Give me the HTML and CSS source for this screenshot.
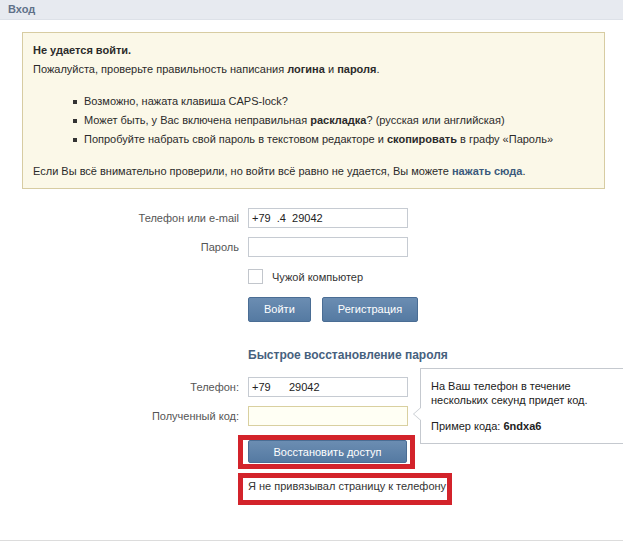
FILE: index.html
```html
<!DOCTYPE html>
<html lang="ru">
<head>
<meta charset="utf-8">
<title>Вход</title>
<link rel="stylesheet" href="styles.css">
</head>
<body>
<div class="header"><span class="title">Вход</span></div>
<div class="content">
  <div class="notice">
    <div class="n-title">Не удается войти.</div>
    <div class="n-line">Пожалуйста, проверьте правильность написания <b>логина</b> и <b>пароля</b>.</div>
    <ul class="n-list">
      <li>Возможно, нажата клавиша CAPS-lock?</li>
      <li>Может быть, у Вас включена неправильная <b>раскладка</b>? (русская или английская)</li>
      <li>Попробуйте набрать свой пароль в текстовом редакторе и <b>скопировать</b> в графу «Пароль»</li>
    </ul>
    <div class="n-line">Если Вы всё внимательно проверили, но войти всё равно не удается, Вы можете <a class="n-link">нажать сюда</a>.</div>
  </div>

  <div class="form">
    <label class="lbl">Телефон или e-mail</label>
    <div class="field">+79&nbsp;&nbsp;.4&nbsp;&nbsp;29042</div>
    <label class="lbl">Пароль</label>
    <div class="field"></div>
    <div></div>
    <div class="check-row"><span class="checkbox"></span><span>Чужой компьютер</span></div>
    <div></div>
    <div class="btn-row"><span class="btn">Войти</span><span class="btn">Регистрация</span></div>
  </div>

  <div class="form recovery">
    <div></div>
    <div class="rec-title">Быстрое восстановление пароля</div>
    <label class="lbl">Телефон:</label>
    <div class="field">+79&nbsp;&nbsp;&nbsp;&nbsp;&nbsp;&nbsp;29042</div>
    <label class="lbl">Полученный код:</label>
    <div class="field code"></div>
    <div></div>
    <div class="mark mark-btn"><span class="btn wide">Восстановить доступ</span></div>
    <div></div>
    <div class="mark mark-link">Я не привязывал страницу к телефону</div>
    <div class="tip">
      <div>На Ваш телефон в течение нескольких секунд придет код.</div>
      <div class="tip-ex">Пример кода: <b>6ndxa6</b></div>
    </div>
  </div>
</div>
<div class="bottom"></div>
</body>
</html>
```
FILE: styles.css
```css
html, body { margin: 0; padding: 0; background: #fff; }
body {
  font-family: "Liberation Sans", Tahoma, sans-serif;
  font-size: 11px;
  color: #2b2b2b;
  width: 623px;
  height: 544px;
  overflow: hidden;
  position: relative;
}
.header {
  height: 19px;
  background: #e7eaf0;
  border-bottom: 1px solid #dde1e8;
  padding-left: 8px;
  line-height: 18px;
}
.title { font-weight: bold; color: #5f7189; font-size: 11px; }
.content { padding: 12px 0 0 22px; }
.notice {
  width: 561px;
  background: #fbf8e8;
  border: 1px solid #d7cca2;
  padding: 8px 10px 7px 10px;
  line-height: 19px;
}
.n-title { font-weight: bold; }
.n-list { margin: 13px 0 13px 0; padding-left: 40px; list-style: none; }
.n-list li { position: relative; padding-left: 11px; }
.n-list li::before {
  content: ""; position: absolute; left: 0; top: 8px;
  width: 4px; height: 4px; background: #333;
}
.n-link { color: #3b5a7c; font-weight: bold; }

.form {
  display: grid;
  grid-template-columns: 217px 200px;
  column-gap: 9px;
  row-gap: 9px;
  margin-top: 19px;
  align-items: center;
}
.lbl { text-align: right; color: #555; }
.field {
  width: 155px; height: 18px;
  border: 1px solid #c6cbd2;
  background: #fff;
  padding-left: 3px;
  line-height: 18px;
  color: #222;
  box-sizing: content-box;
}
.field.code { border-color: #d9d0a0; background: #fffff4; }
.check-row { display: flex; align-items: center; gap: 9px; color: #333; margin-top: 3px; }
.checkbox { width: 13px; height: 13px; border: 1px solid #c2c6cc; background: #fff; }
.btn-row { display: flex; gap: 11px; margin-top: 4px; }
.btn {
  display: inline-block;
  height: 23px; line-height: 23px;
  padding: 0 15px;
  color: #fff;
  background: linear-gradient(#6b8db2, #557aa2);
  border: 1px solid #4a6d94;
  border-radius: 2px;
  text-align: center;
}
.recovery { margin-top: 26px; position: relative; row-gap: 9px; }
.rec-title { font-weight: bold; color: #46617e; font-size: 12px; margin-bottom: 6px; white-space: nowrap; }
.mark { border: 5px solid #d3232b; margin-left: -10px; box-sizing: border-box; }
.mark-btn { width: 177px; padding: 0 3px 1px 5px; margin-top: 0; }
.btn.wide { width: 159px; padding: 0; box-sizing: border-box; }
.mark-link {
  width: 214px; padding: 1px 0 7px 5px; margin-top: -5px;
  color: #333; white-space: nowrap; line-height: 14px;
}
.tip {
  position: absolute;
  left: 398px; top: 20px;
  width: 190px;
  padding: 10px 10px 10px 10px;
  border: 1px solid #c5c9cf;
  background: #fff;
  line-height: 14px;
  color: #222;
}
.tip::before {
  content: ""; position: absolute; left: -8px; top: 38px;
  border-style: solid; border-width: 7px 8px 7px 0;
  border-color: transparent #c5c9cf transparent transparent;
}
.tip::after {
  content: ""; position: absolute; left: -7px; top: 38px;
  border-style: solid; border-width: 7px 8px 7px 0;
  border-color: transparent #fff transparent transparent;
}
.tip-ex { margin-top: 12px; }
.bottom {
  position: absolute; left: 0; right: 0; top: 540px;
  border-top: 1px solid #dcdcdc;
}
```
